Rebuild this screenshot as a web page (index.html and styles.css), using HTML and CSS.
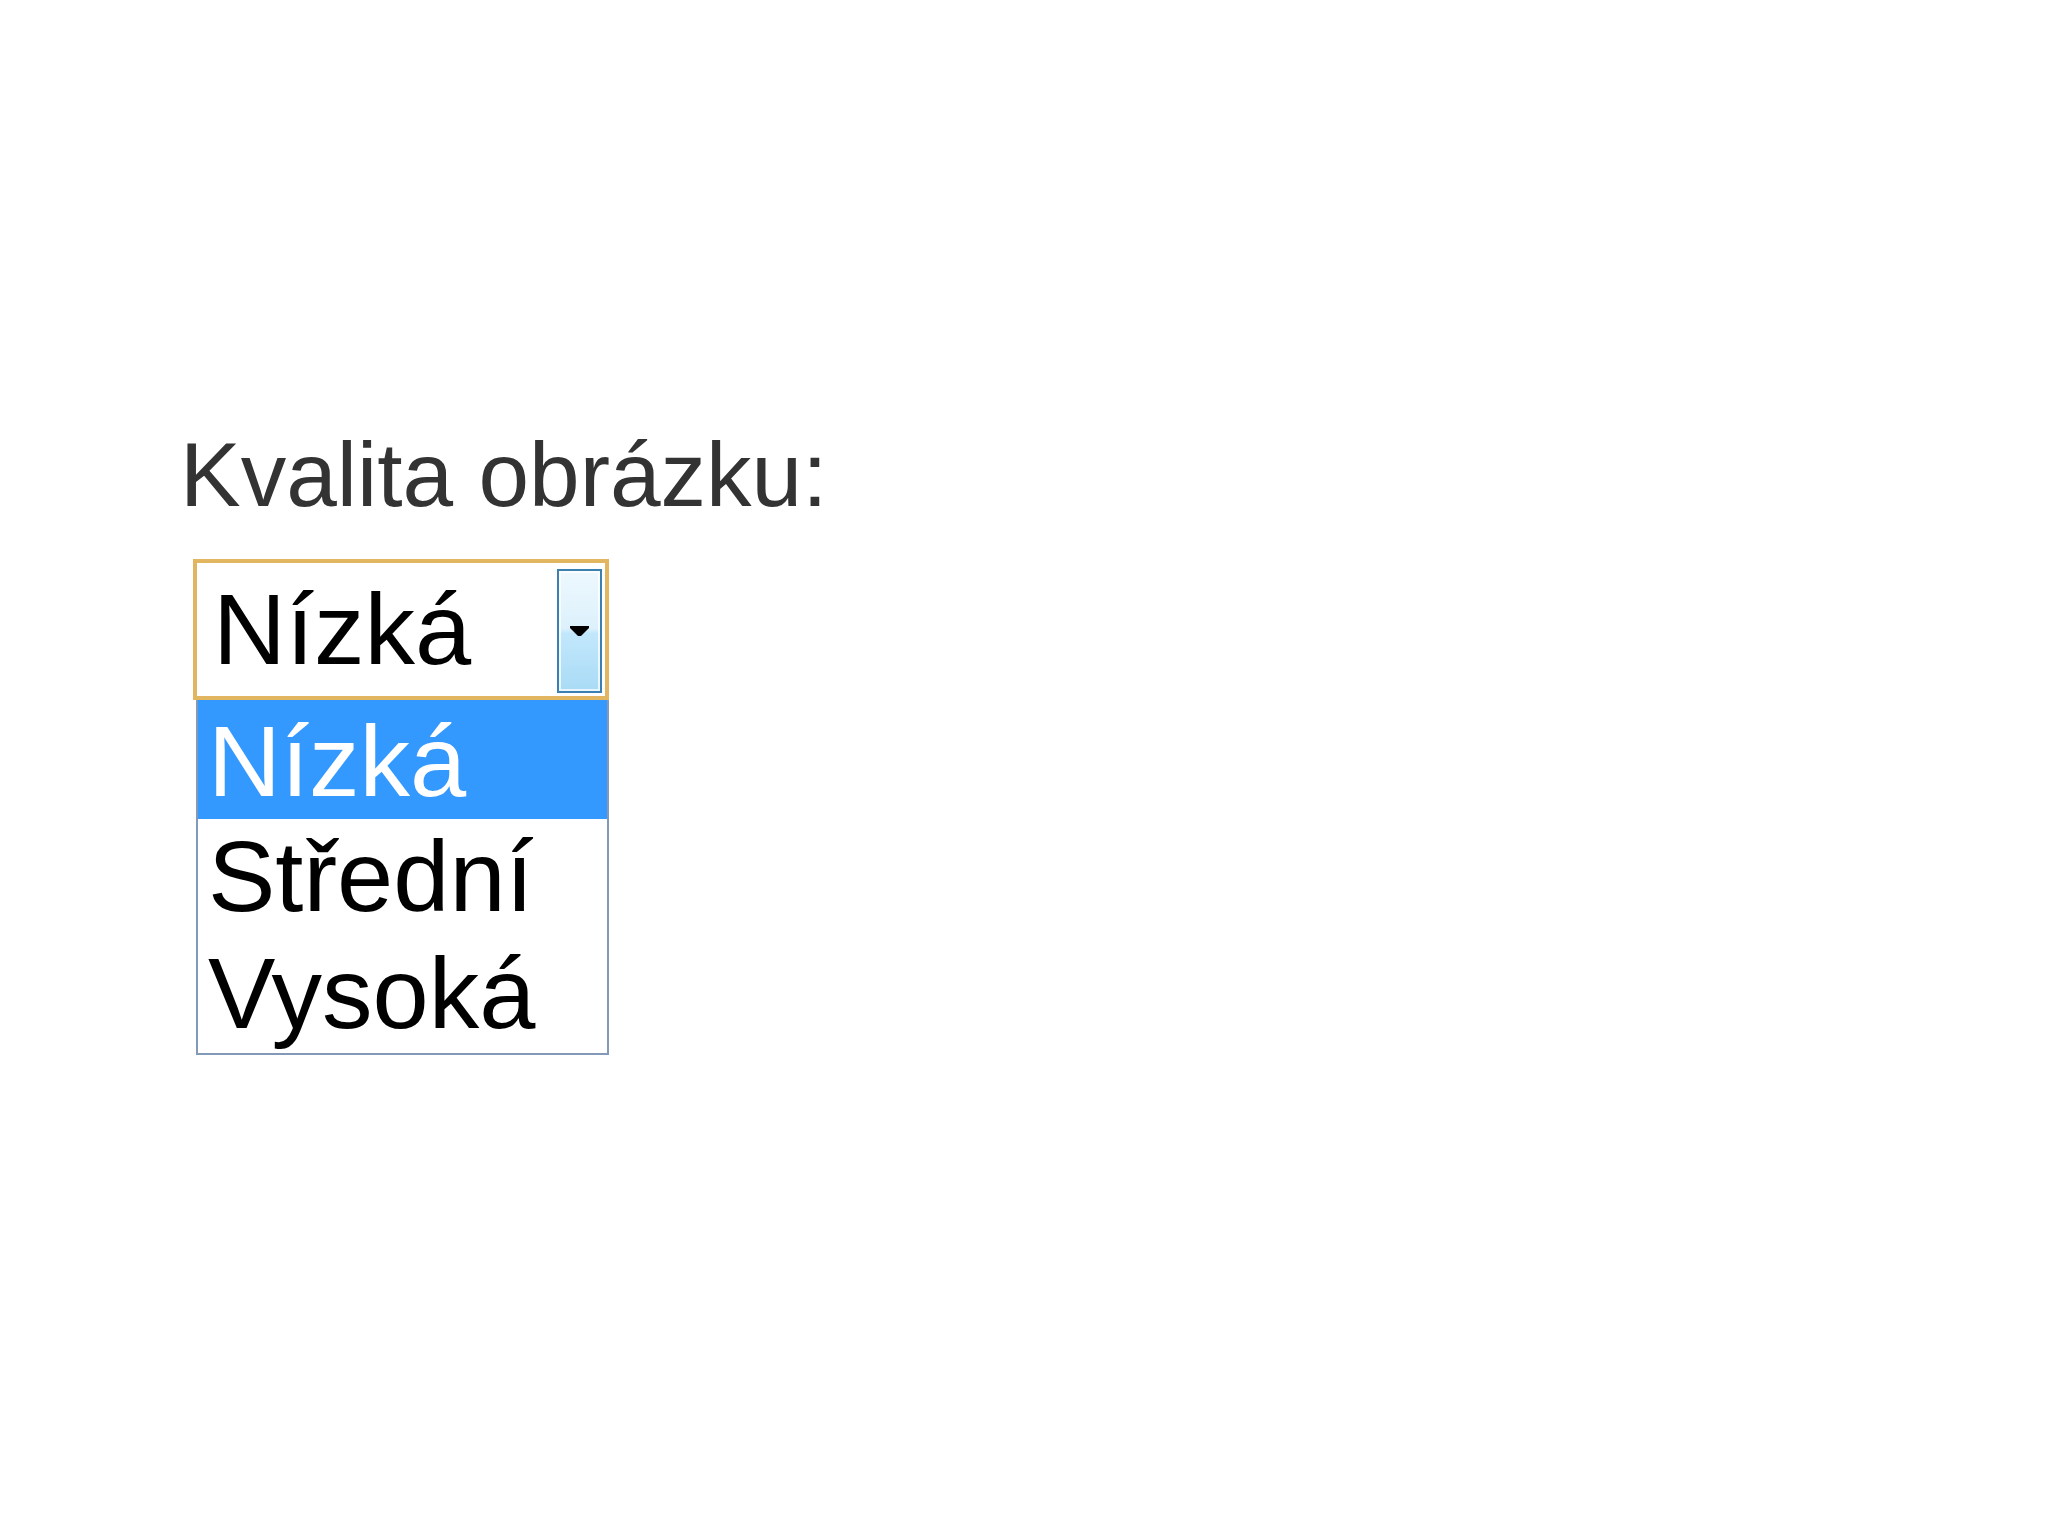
FILE: index.html
```html
<!DOCTYPE html>
<html lang="cs">
<head>
<meta charset="utf-8">
<title>Kvalita obrázku</title>
<link rel="stylesheet" href="styles.css">
</head>
<body>
<div class="page">
  <div class="label">Kvalita obrázku:</div>
  <div class="combo">
    <div class="combo-value">Nízká</div>
    <div class="combo-button">
      <svg class="arrow" width="19" height="10" viewBox="0 0 19 10"><polygon points="0,0 19,0 19,2 11,10 8,10 0,2" fill="#000"/></svg>
    </div>
  </div>
  <ul class="list">
    <li class="item selected">Nízká</li>
    <li class="item">Střední</li>
    <li class="item">Vysoká</li>
  </ul>
</div>
</body>
</html>
```
FILE: styles.css
```css
html, body {
  margin: 0;
  padding: 0;
  background: #ffffff;
}
body {
  font-family: "Liberation Sans", Arial, sans-serif;
}
.page {
  padding: 429px 0 0 180px;
}
.label {
  font-size: 91px;
  line-height: 92px;
  color: #333333;
  white-space: nowrap;
}
.combo {
  box-sizing: border-box;
  margin: 38px 0 0 13px;
  width: 416px;
  height: 141px;
  border: 4px solid #e2b660;
  background: #ffffff;
  display: flex;
  align-items: flex-start;
}
.combo-value {
  flex: 1;
  padding-left: 16px;
  font-size: 101px;
  line-height: 133px;
  color: #000000;
}
.combo-button {
  box-sizing: border-box;
  width: 45px;
  height: 124px;
  margin: 6px 3px 0 0;
  border: 2px solid #3c7fb1;
  box-shadow: inset 0 0 0 2px rgba(255, 255, 255, 0.75);
  background: linear-gradient(#eef8fe 0%, #dcf1fc 48%, #c2e7fc 52%, #a9dbf6 100%);
  display: flex;
  align-items: center;
  justify-content: center;
}
.arrow {
  display: block;
}
.list {
  box-sizing: border-box;
  list-style: none;
  margin: 0 0 0 16px;
  padding: 0;
  width: 413px;
  border: 2px solid #8299b8;
  border-top: none;
  background: #ffffff;
}
.item {
  height: 117px;
  padding-left: 10px;
  font-size: 101px;
  line-height: 114px;
  color: #000000;
  white-space: nowrap;
}
.item.selected {
  height: 119px;
  line-height: 122px;
  background: #3399ff;
  color: #ffffff;
}
```
